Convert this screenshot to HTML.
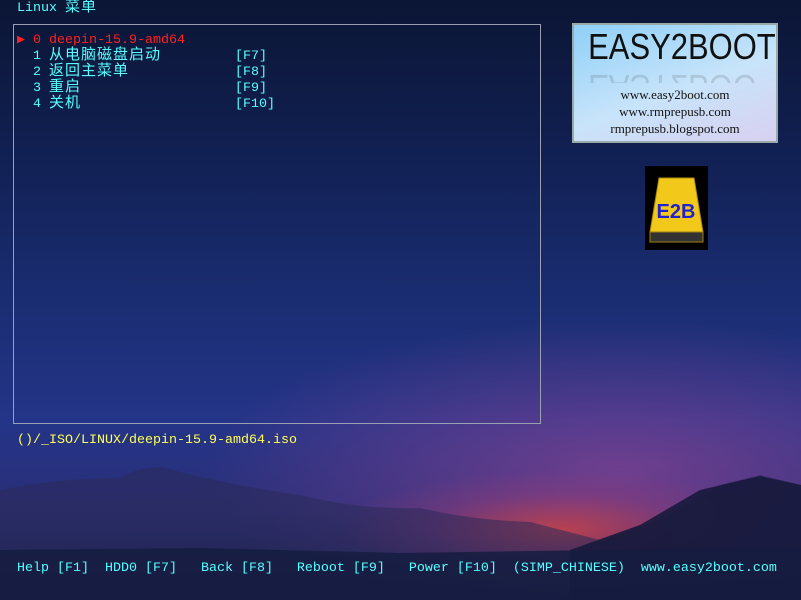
<!DOCTYPE html>
<html><head><meta charset="utf-8"><style>
*{margin:0;padding:0}
body{width:801px;height:600px;overflow:hidden;position:relative;font-family:"Liberation Mono","WenQuanYi Zen Hei",monospace;font-size:13.33px;line-height:16px;
background:
radial-gradient(ellipse 220px 60px at 560px 530px,rgba(230,70,60,.7),rgba(170,60,110,.3) 60%,transparent),
radial-gradient(ellipse 420px 150px at 620px 470px,rgba(150,70,150,.65),transparent),
linear-gradient(180deg,#0b1534 0%,#112052 25%,#1a2d72 50%,#243488 70%,#2a2f78 85%,#161c44 100%);}
.t{position:absolute;white-space:pre;height:16px;line-height:16px}
.k{font-size:15px;line-height:0;letter-spacing:1px}
.c{color:#55ffff}.r{color:#ff2020}.y{color:#ffff55}
#box{position:absolute;left:13px;top:24px;width:526px;height:398px;border:1px solid #9aa0b0}
svg{position:absolute;left:0;top:0}
</style></head><body>
<svg width="801" height="600">
<path d="M0 490 Q60 478 120 478 Q150 460 180 472 Q230 485 300 495 Q360 510 420 508 Q470 520 530 522 L600 540 L660 520 L720 485 L760 475 L801 485 L801 600 L0 600Z" fill="#2a2a58" opacity=".55"/>
<path d="M570 550 L640 525 L700 490 L760 476 L801 485 L801 600 L570 600Z" fill="#171a3c" opacity=".9"/>
<path d="M0 550 L200 548 L400 553 L600 550 L801 547 L801 600 L0 600Z" fill="#151c40" opacity=".85"/>
</svg>
<div class="t c" style="left:17px;top:1px">Linux <span class="k">菜单</span></div>
<div id="box"></div>
<div class="t r" style="left:17px;top:33px">▶ 0 deepin-15.9-amd64</div>
<div class="t c" style="left:33px;top:49px">1 <span class="k">从电脑磁盘启动</span></div>
<div class="t c" style="left:33px;top:65px">2 <span class="k">返回主菜单</span></div>
<div class="t c" style="left:33px;top:81px">3 <span class="k">重启</span></div>
<div class="t c" style="left:33px;top:97px">4 <span class="k">关机</span></div>
<div class="t c" style="left:235px;top:49px">[F7]</div>
<div class="t c" style="left:235px;top:65px">[F8]</div>
<div class="t c" style="left:235px;top:81px">[F9]</div>
<div class="t c" style="left:235px;top:97px">[F10]</div>
<div class="t y" style="left:17px;top:433px">()/_ISO/LINUX/deepin-15.9-amd64.iso</div>
<div class="t c" style="left:17px;top:561px">Help [F1]  HDD0 [F7]   Back [F8]   Reboot [F9]   Power [F10]  (SIMP_CHINESE)  www.easy2boot.com</div>
<div style="position:absolute;left:572px;top:23px;width:202px;height:116px;border:2px solid #9aa;background:linear-gradient(160deg,#8fd0f8,#c8e4fa 55%,#d8d0f0);font-family:'Liberation Serif',serif;text-align:center;color:#111;overflow:hidden">
<div style="font-family:'Liberation Sans',sans-serif;font-size:36px;line-height:40px;margin-top:2px;transform:scaleX(.86)">EASY2BOOT</div>
<div style="height:16px;font-family:'Liberation Sans',sans-serif;font-size:36px;line-height:40px;overflow:hidden;transform:scaleX(.86) scaleY(-1);color:rgba(0,0,0,.12)"><div style="margin-top:-24px">EASY2BOOT</div></div>
<div style="font-size:13px;line-height:17px;margin-top:3px">www.easy2boot.com<br>www.rmprepusb.com<br>rmprepusb.blogspot.com</div></div>
<div style="position:absolute;left:645px;top:166px;width:63px;height:84px;background:#000">
<svg width="63" height="84"><path d="M14 12 L49 12 L58 66 L5 66Z" fill="#f2c81a" stroke="#b08a10"/><rect x="5" y="66" width="53" height="10" fill="#333" stroke="#a08010"/><text x="31" y="52" text-anchor="middle" font-family="Liberation Sans" font-weight="bold" font-size="20" fill="#2222cc">E2B</text></svg></div>
</body></html>
